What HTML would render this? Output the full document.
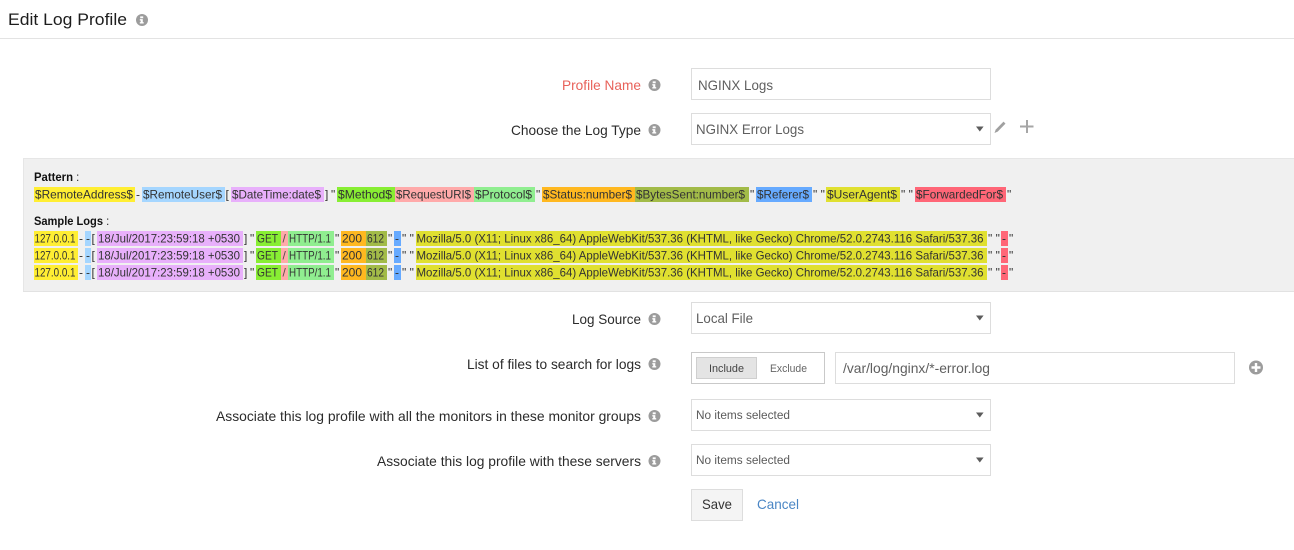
<!DOCTYPE html>
<html><head><meta charset="utf-8"><title>Edit Log Profile</title>
<style>
html,body{margin:0;padding:0;background:#fff;width:1294px;height:550px;overflow:hidden}
svg{display:block}
text{font-family:"Liberation Sans",sans-serif;white-space:pre}
.l{font-size:14px;fill:#2b2b2b}
.f{font-size:14px;fill:#5f5f5f}
.s{font-size:11.5px;fill:#5a5a5a}
.p{font-size:12px;fill:#333}
.b{font-size:11.5px;font-weight:bold;fill:#111}
.box{fill:#fff;stroke:#ddd;stroke-width:1}
</style></head><body>
<svg width="1294" height="550" viewBox="0 0 1294 550" xmlns="http://www.w3.org/2000/svg" xmlns:xlink="http://www.w3.org/1999/xlink">
<defs>
<g id="info"><circle r="6" fill="#9c9c9c"/><path d="M-1.8 -3.6h3v1.9h-3zM-2.2 -0.9h3v3h0.9v1.4h-3.9v-1.4h0.9v-1.6h-0.9z" fill="#fff"/></g>
<path id="arrow" d="M0 0h7.6l-3.8 5z" fill="#5c5c5c"/>
<g id="row">
<rect x="34" width="44" height="15" fill="#ffee33"/>
<rect x="85" width="6" height="15" fill="#a5d6ff"/>
<rect x="97" width="146" height="15" fill="#e8b0fb"/>
<rect x="256" width="25" height="15" fill="#88ee33"/>
<rect x="281" width="7" height="15" fill="#ffaaaa"/>
<rect x="288" width="46" height="15" fill="#90ee90"/>
<rect x="341" width="25" height="15" fill="#ffb820"/>
<rect x="366" width="21" height="15" fill="#a2bb48"/>
<rect x="394" width="7" height="15" fill="#66aaff"/>
<rect x="416" width="571" height="15" fill="#e0e030"/>
<rect x="1001" width="7" height="15" fill="#ff6677"/>
<text class="p" x="34.5" y="11.5" textLength="41" lengthAdjust="spacingAndGlyphs">127.0.0.1</text>
<text class="p" x="79" y="11.5">-</text>
<text class="p" x="86" y="11.5">-</text>
<text class="p" x="91.5" y="11.5">[</text>
<text class="p" x="98" y="11.5" textLength="142" lengthAdjust="spacingAndGlyphs">18/Jul/2017:23:59:18 +0530</text>
<text class="p" x="244" y="11.5">]</text>
<text class="p" x="250" y="11.5">"</text>
<text class="p" x="257" y="11.5" textLength="21" lengthAdjust="spacingAndGlyphs">GET</text>
<text class="p" x="282.5" y="11.5" fill-opacity="0.8">/</text>
<text class="p" x="289" y="11.5" textLength="42" lengthAdjust="spacingAndGlyphs">HTTP/1.1</text>
<text class="p" x="335" y="11.5">"</text>
<text class="p" x="342" y="11.5" textLength="20" lengthAdjust="spacingAndGlyphs">200</text>
<text class="p" x="367" y="11.5" textLength="17" lengthAdjust="spacingAndGlyphs">612</text>
<text class="p" x="388" y="11.5">"</text>
<text class="p" x="395" y="11.5">-</text>
<text class="p" x="402" y="11.5">" "</text>
<text class="p" x="416.5" y="11.5" textLength="567" lengthAdjust="spacingAndGlyphs">Mozilla/5.0 (X11; Linux x86_64) AppleWebKit/537.36 (KHTML, like Gecko) Chrome/52.0.2743.116 Safari/537.36</text>
<text class="p" x="988" y="11.5">" "</text>
<text class="p" x="1002" y="11.5">-</text>
<text class="p" x="1009" y="11.5">"</text>
</g>
</defs>

<!-- Header -->
<text x="8" y="25" font-size="16.5" fill="#1d1d1d" textLength="119" lengthAdjust="spacingAndGlyphs">Edit Log Profile</text>
<use xlink:href="#info" href="#info" x="142" y="20"/>
<rect x="0" y="38" width="1294" height="1" fill="#e3e3e3"/>

<!-- Profile name -->
<text class="l" x="562" y="90" style="fill:#e8625a" textLength="79" lengthAdjust="spacingAndGlyphs">Profile Name</text>
<use xlink:href="#info" href="#info" x="654.5" y="85"/>
<rect class="box" x="691.5" y="68.5" width="299" height="31"/>
<text class="f" x="698" y="90" textLength="75" lengthAdjust="spacingAndGlyphs">NGINX Logs</text>

<!-- Log type -->
<text class="l" x="511" y="135" textLength="130" lengthAdjust="spacingAndGlyphs">Choose the Log Type</text>
<use xlink:href="#info" href="#info" x="654.5" y="130"/>
<rect class="box" x="691.5" y="113.5" width="299" height="31"/>
<text class="f" x="696" y="134" textLength="108" lengthAdjust="spacingAndGlyphs">NGINX Error Logs</text>
<use xlink:href="#arrow" href="#arrow" x="976" y="126.5"/>
<path d="M994.5 133l1.2-3.4 7.8-8 2 2-7.8 8z" fill="#a0a0a0"/>
<path d="M1027 120v13M1020 126.5h13.5" stroke="#a6a6a6" stroke-width="2" fill="none"/>

<!-- Pattern panel -->
<rect x="23" y="158" width="1271" height="134" fill="#f0f0f0"/>
<rect x="23" y="158" width="1" height="134" fill="#e6e6e6"/>
<rect x="23" y="158" width="1271" height="1" fill="#e6e6e6"/>
<rect x="23" y="291" width="1271" height="1" fill="#e2e2e2"/>
<text class="b" x="34" y="181" textLength="39" lengthAdjust="spacingAndGlyphs">Pattern</text>
<text class="p" x="76" y="181">:</text>

<rect x="34" y="187" width="101" height="15" fill="#ffee33"/>
<rect x="142" y="187" width="83" height="15" fill="#a5d6ff"/>
<rect x="231" y="187" width="93" height="15" fill="#e8b0fb"/>
<rect x="337" y="187" width="58" height="15" fill="#88ee33"/>
<rect x="395" y="187" width="79" height="15" fill="#ffaaaa"/>
<rect x="474" y="187" width="61" height="15" fill="#90ee90"/>
<rect x="542" y="187" width="93" height="15" fill="#ffb820"/>
<rect x="635" y="187" width="114" height="15" fill="#a2bb48"/>
<rect x="756" y="187" width="56" height="15" fill="#66aaff"/>
<rect x="826" y="187" width="74" height="15" fill="#e0e030"/>
<rect x="915" y="187" width="91" height="15" fill="#ff6677"/>
<g>
<text class="p" x="35" y="198.5" textLength="98" lengthAdjust="spacingAndGlyphs">$RemoteAddress$</text>
<text class="p" x="136" y="198.5">-</text>
<text class="p" x="143" y="198.5" textLength="79" lengthAdjust="spacingAndGlyphs">$RemoteUser$</text>
<text class="p" x="225.5" y="198.5">[</text>
<text class="p" x="232" y="198.5" textLength="89" lengthAdjust="spacingAndGlyphs">$DateTime:date$</text>
<text class="p" x="325" y="198.5">]</text>
<text class="p" x="331" y="198.5">"</text>
<text class="p" x="338" y="198.5" textLength="54" lengthAdjust="spacingAndGlyphs">$Method$</text>
<text class="p" x="396" y="198.5" textLength="75" lengthAdjust="spacingAndGlyphs">$RequestURI$</text>
<text class="p" x="475" y="198.5" textLength="57" lengthAdjust="spacingAndGlyphs">$Protocol$</text>
<text class="p" x="536" y="198.5">"</text>
<text class="p" x="543" y="198.5" textLength="89" lengthAdjust="spacingAndGlyphs">$Status:number$</text>
<text class="p" x="636" y="198.5" textLength="109" lengthAdjust="spacingAndGlyphs">$BytesSent:number$</text>
<text class="p" x="750" y="198.5">"</text>
<text class="p" x="757" y="198.5" textLength="52" lengthAdjust="spacingAndGlyphs">$Referer$</text>
<text class="p" x="813" y="198.5">" "</text>
<text class="p" x="827" y="198.5" textLength="70" lengthAdjust="spacingAndGlyphs">$UserAgent$</text>
<text class="p" x="901" y="198.5">" "</text>
<text class="p" x="916" y="198.5" textLength="87" lengthAdjust="spacingAndGlyphs">$ForwardedFor$</text>
<text class="p" x="1007" y="198.5">"</text>
</g>

<text class="b" x="34" y="225" textLength="69" lengthAdjust="spacingAndGlyphs">Sample Logs</text>
<text class="p" x="106" y="225">:</text>
<use xlink:href="#row" href="#row" x="0" y="231"/>
<use xlink:href="#row" href="#row" x="0" y="248"/>
<use xlink:href="#row" href="#row" x="0" y="265"/>

<!-- Log source -->
<text class="l" x="572" y="324" textLength="69" lengthAdjust="spacingAndGlyphs">Log Source</text>
<use xlink:href="#info" href="#info" x="654.5" y="319"/>
<rect class="box" x="691.5" y="302.5" width="299" height="31"/>
<text class="f" x="696" y="323" textLength="57" lengthAdjust="spacingAndGlyphs">Local File</text>
<use xlink:href="#arrow" href="#arrow" x="976" y="315.5"/>

<!-- Files -->
<text class="l" x="467" y="369" textLength="174" lengthAdjust="spacingAndGlyphs">List of files to search for logs</text>
<use xlink:href="#info" href="#info" x="654.5" y="364"/>
<rect x="691.5" y="352.5" width="133" height="31" fill="#fff" stroke="#c9c9c9"/>
<rect x="696.5" y="357.5" width="60" height="21" fill="#e4e4e4" stroke="#cfcfcf"/>
<text x="709" y="372" font-size="11" fill="#444" textLength="35" lengthAdjust="spacingAndGlyphs">Include</text>
<text x="770" y="372" font-size="11" fill="#666" textLength="37" lengthAdjust="spacingAndGlyphs">Exclude</text>
<rect class="box" x="835.5" y="352.5" width="399" height="31"/>
<text class="f" x="843" y="373" textLength="147" lengthAdjust="spacingAndGlyphs">/var/log/nginx/*-error.log</text>
<circle cx="1256" cy="367.5" r="7" fill="#9c9c9c"/>
<path d="M1256 363v9M1251.5 367.5h9" stroke="#fff" stroke-width="2.4" fill="none"/>

<!-- Groups -->
<text class="l" x="216" y="421" textLength="425" lengthAdjust="spacingAndGlyphs">Associate this log profile with all the monitors in these monitor groups</text>
<use xlink:href="#info" href="#info" x="654.5" y="416"/>
<rect class="box" x="691.5" y="399.5" width="299" height="31"/>
<text class="s" x="696" y="419" textLength="94" lengthAdjust="spacingAndGlyphs">No items selected</text>
<use xlink:href="#arrow" href="#arrow" x="976" y="412.5"/>

<!-- Servers -->
<text class="l" x="377" y="466" textLength="264" lengthAdjust="spacingAndGlyphs">Associate this log profile with these servers</text>
<use xlink:href="#info" href="#info" x="654.5" y="461"/>
<rect class="box" x="691.5" y="444.5" width="299" height="31"/>
<text class="s" x="696" y="464" textLength="94" lengthAdjust="spacingAndGlyphs">No items selected</text>
<use xlink:href="#arrow" href="#arrow" x="976" y="457.5"/>

<!-- Actions -->
<rect x="691.5" y="489.5" width="51" height="31" fill="#f4f4f4" stroke="#ddd"/>
<text x="702" y="509" font-size="14" fill="#333" textLength="30" lengthAdjust="spacingAndGlyphs">Save</text>
<text x="757" y="509" font-size="14" fill="#4a86c5" textLength="42" lengthAdjust="spacingAndGlyphs">Cancel</text>
</svg>
</body></html>
